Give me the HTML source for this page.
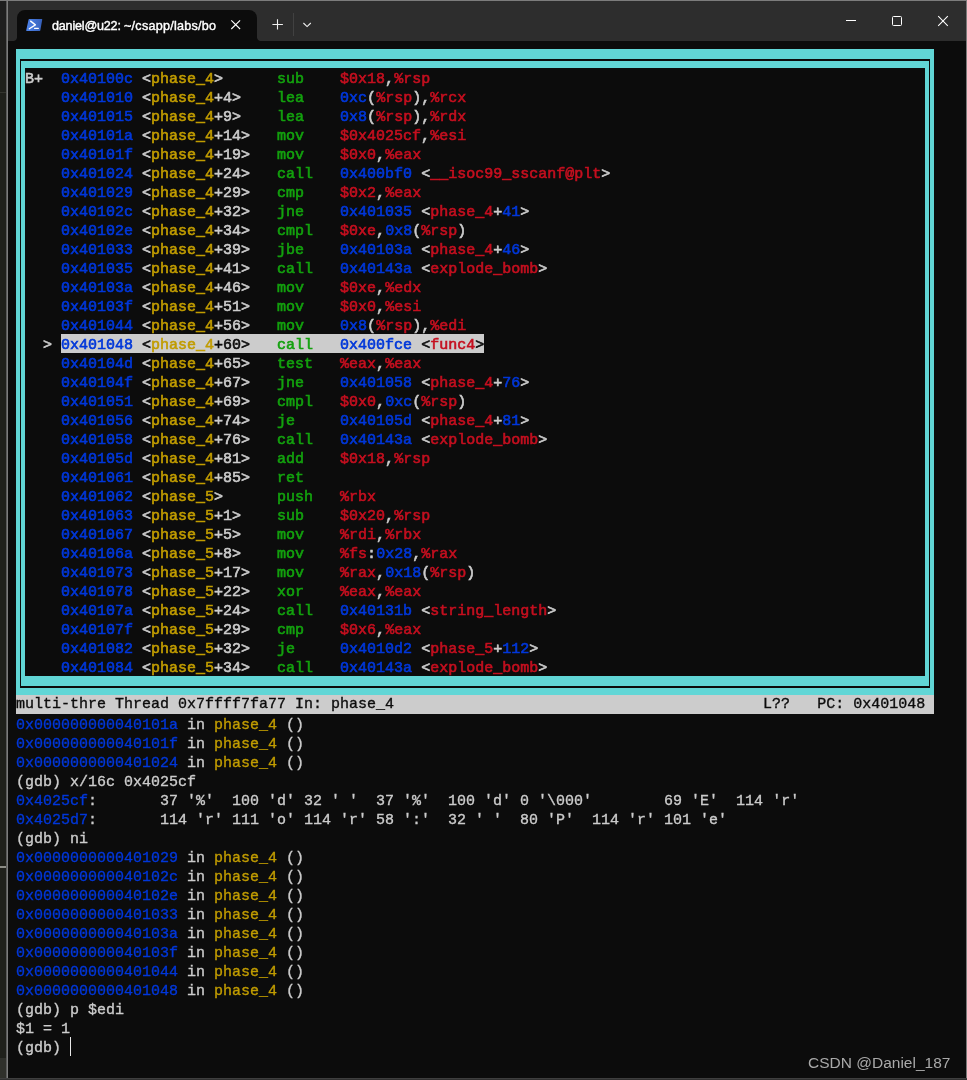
<!DOCTYPE html>
<html>
<head>
<meta charset="utf-8">
<title>gdb</title>
<style>
html,body{margin:0;padding:0;}
body{width:967px;height:1080px;overflow:hidden;background:#0c0c0c;position:relative;font-family:"Liberation Mono",monospace;}
.abs{position:absolute;}
/* outside strips */
#lstrip{left:0;top:0;width:6px;height:1080px;background:#1f201b;}
#lstrip1{left:0;top:0;width:6px;height:35px;background:#1e1e1e;}
#lstrip4{left:0;top:866px;width:6px;height:2px;background:#8c8c86;}
#lstrip5{left:0;top:92px;width:6px;height:1px;background:#34352f;}
#lstrip2{left:0;top:35px;width:6px;height:35px;background:#1e1e1c;}
#lstrip3{left:0;top:1058px;width:6px;height:22px;background:#2f302b;}
#bl{left:6px;top:0;width:2px;height:1078px;background:linear-gradient(to right,#595959 0,#595959 1px,#7c7c7c 1px,#7c7c7c 2px);}
#bt{left:0;top:0;width:967px;height:1px;background:#7c7c7c;}
#br{left:966px;top:0;width:1px;height:1078px;background:#7a7a7a;}
#bb{left:0;top:1078px;width:967px;height:1px;background:#3f3f3f;}
#bb2{left:0;top:1079px;width:967px;height:1px;background:#303030;}
#titlebar{left:8px;top:1px;width:958px;height:40px;background:#2d2d2d;}
#tab{left:17px;top:10px;width:240px;height:31px;background:#0c0c0c;border-radius:8px 8px 0 0;}
#tabl{left:13px;top:37px;width:4px;height:4px;background:radial-gradient(circle at 0 0,#2d2d2d 3.5px,#0c0c0c 4.5px);}
#tabr{left:257px;top:37px;width:4px;height:4px;background:radial-gradient(circle at 100% 0,#2d2d2d 3.5px,#0c0c0c 4.5px);}
#tabtext{left:52px;top:18px;font-family:"Liberation Sans",sans-serif;font-size:12.6px;line-height:16px;color:#fff;white-space:pre;letter-spacing:0.02px;-webkit-text-stroke:0.4px #fff;}
#divider{left:293px;top:13px;width:1px;height:23px;background:#414141;}
svg{position:absolute;overflow:visible;}
/* TUI frame */
#frame{left:16px;top:49px;width:918px;height:646px;background:#61d6d6;}
#fline{left:20px;top:59px;width:910px;height:629px;box-sizing:border-box;border:solid #0c0c0c;border-width:2px 1px 2px 1px;}
#inner{left:25px;top:68px;width:900px;height:608px;background:#0c0c0c;}
.row{position:absolute;height:19px;line-height:19px;font-size:15px;white-space:pre;color:#ccc;-webkit-text-stroke:0.35px currentColor;}
.row span{position:relative;top:1.5px;}
.tui{-webkit-text-stroke:0.6px currentColor;}
.w{color:#ccc}.b{color:#0037da}.y{color:#c19c00}.g{color:#13a10e}.r{color:#c50f1f}
.hl{background:#ccc;}
.hl .w{color:#0c0c0c}
.status{background:#ccc;color:#0c0c0c;}
#cursor{left:70px;top:1037px;width:1px;height:19px;background:#e8e8e8;}
#wm{left:808px;top:1053px;font-family:"Liberation Sans",sans-serif;font-size:15.5px;line-height:20px;color:#a9a9a9;white-space:pre;}
</style>
</head>
<body>
<div id="root" style="position:absolute;left:0;top:0;width:967px;height:1080px;will-change:transform;transform:translateZ(0)">
<div class="abs" id="lstrip"></div>
<div class="abs" id="lstrip1"></div>
<div class="abs" id="lstrip2"></div>
<div class="abs" id="lstrip3"></div>
<div class="abs" id="lstrip4"></div>
<div class="abs" id="lstrip5"></div>
<div class="abs" id="titlebar"></div>
<div class="abs" id="bl"></div>
<div class="abs" id="bt"></div>
<div class="abs" id="br"></div>
<div class="abs" id="bb"></div>
<div class="abs" id="bb2"></div>
<div class="abs" id="tab"></div>
<div class="abs" id="tabl"></div>
<div class="abs" id="tabr"></div>
<!-- powershell icon -->
<svg style="left:25.5px;top:19px" width="17" height="13" viewBox="0 0 17 13">
  <defs><linearGradient id="psg" x1="0" y1="0" x2="1" y2="0"><stop offset="0" stop-color="#4e84ec"/><stop offset="1" stop-color="#3660ba"/></linearGradient></defs>
  <path d="M3.3 0 H15.8 Q16.4 0 16.25 0.6 L14.35 11.3 Q14.2 11.9 13.6 11.9 H0.7 Q0.1 11.9 0.25 11.3 L2.6 0.6 Q2.75 0 3.3 0 Z" fill="url(#psg)"/>
  <path d="M4.6 2.1 L9.4 5.9 L3.3 9.7" fill="none" stroke="#fff" stroke-width="1.35" stroke-linecap="round" stroke-linejoin="round"/>
  <path d="M8.6 9.35 H12.3" fill="none" stroke="#fff" stroke-width="1.35" stroke-linecap="round"/>
</svg>
<div class="abs" id="tabtext"><span style="letter-spacing:-0.2px">daniel@u22: </span><span style="letter-spacing:0.25px">~/csapp/labs/bo</span></div>
<!-- tab close -->
<svg style="left:231px;top:20px" width="10" height="10" viewBox="0 0 10 10"><path d="M0.3 0.3 L9.1 9.0 M9.1 0.3 L0.3 9.0" stroke="#fff" stroke-width="1.1" fill="none"/></svg>
<!-- plus -->
<svg style="left:272px;top:19px" width="11" height="11" viewBox="0 0 11 11"><path d="M5.5 0.3 V10.6 M0.4 5.5 H10.9" stroke="#f0f0f0" stroke-width="1.1" fill="none"/></svg>
<div class="abs" id="divider"></div>
<!-- chevron -->
<svg style="left:302px;top:22px" width="10" height="6" viewBox="0 0 10 6"><path d="M1.4 1.0 L5.1 4.6 L8.8 1.0" stroke="#f0f0f0" stroke-width="1.1" fill="none"/></svg>
<!-- window controls -->
<div class="abs" style="left:846px;top:20px;width:10px;height:1px;background:#fff"></div>
<div class="abs" style="left:892px;top:16px;width:10px;height:10px;box-sizing:border-box;border:1px solid #fff;border-radius:1.5px"></div>
<svg style="left:938px;top:16px" width="10" height="10" viewBox="0 0 10 10"><path d="M0.2 0.2 L9.8 9.8 M9.8 0.2 L0.2 9.8" stroke="#fff" stroke-width="1.05" fill="none"/></svg>

<div class="abs" id="frame"></div>
<div class="abs" id="fline"></div>
<div class="abs" id="inner"></div>
<div class="row tui" style="top:68px;left:25px"><span class="w">B+</span></div>
<div class="row tui" style="top:68px;left:61px"><span class="b">0x40100c</span><span class="w"> &lt;</span><span class="y">phase_4</span><span class="w">&gt;      </span><span class="g">sub</span><span class="w">    </span><span class="r">$0x18</span><span class="w">,</span><span class="r">%rsp</span></div>
<div class="row tui" style="top:87px;left:61px"><span class="b">0x401010</span><span class="w"> &lt;</span><span class="y">phase_4</span><span class="w">+4&gt;    </span><span class="g">lea</span><span class="w">    </span><span class="b">0xc</span><span class="w">(</span><span class="r">%rsp</span><span class="w">)</span><span class="w">,</span><span class="r">%rcx</span></div>
<div class="row tui" style="top:106px;left:61px"><span class="b">0x401015</span><span class="w"> &lt;</span><span class="y">phase_4</span><span class="w">+9&gt;    </span><span class="g">lea</span><span class="w">    </span><span class="b">0x8</span><span class="w">(</span><span class="r">%rsp</span><span class="w">)</span><span class="w">,</span><span class="r">%rdx</span></div>
<div class="row tui" style="top:125px;left:61px"><span class="b">0x40101a</span><span class="w"> &lt;</span><span class="y">phase_4</span><span class="w">+14&gt;   </span><span class="g">mov</span><span class="w">    </span><span class="r">$0x4025cf</span><span class="w">,</span><span class="r">%esi</span></div>
<div class="row tui" style="top:144px;left:61px"><span class="b">0x40101f</span><span class="w"> &lt;</span><span class="y">phase_4</span><span class="w">+19&gt;   </span><span class="g">mov</span><span class="w">    </span><span class="r">$0x0</span><span class="w">,</span><span class="r">%eax</span></div>
<div class="row tui" style="top:163px;left:61px"><span class="b">0x401024</span><span class="w"> &lt;</span><span class="y">phase_4</span><span class="w">+24&gt;   </span><span class="g">call</span><span class="w">   </span><span class="b">0x400bf0</span><span class="w"> </span><span class="w">&lt;</span><span class="r">__isoc99_sscanf@plt</span><span class="w">&gt;</span></div>
<div class="row tui" style="top:182px;left:61px"><span class="b">0x401029</span><span class="w"> &lt;</span><span class="y">phase_4</span><span class="w">+29&gt;   </span><span class="g">cmp</span><span class="w">    </span><span class="r">$0x2</span><span class="w">,</span><span class="r">%eax</span></div>
<div class="row tui" style="top:201px;left:61px"><span class="b">0x40102c</span><span class="w"> &lt;</span><span class="y">phase_4</span><span class="w">+32&gt;   </span><span class="g">jne</span><span class="w">    </span><span class="b">0x401035</span><span class="w"> </span><span class="w">&lt;</span><span class="r">phase_4</span><span class="w">+</span><span class="b">41</span><span class="w">&gt;</span></div>
<div class="row tui" style="top:220px;left:61px"><span class="b">0x40102e</span><span class="w"> &lt;</span><span class="y">phase_4</span><span class="w">+34&gt;   </span><span class="g">cmpl</span><span class="w">   </span><span class="r">$0xe</span><span class="w">,</span><span class="b">0x8</span><span class="w">(</span><span class="r">%rsp</span><span class="w">)</span></div>
<div class="row tui" style="top:239px;left:61px"><span class="b">0x401033</span><span class="w"> &lt;</span><span class="y">phase_4</span><span class="w">+39&gt;   </span><span class="g">jbe</span><span class="w">    </span><span class="b">0x40103a</span><span class="w"> </span><span class="w">&lt;</span><span class="r">phase_4</span><span class="w">+</span><span class="b">46</span><span class="w">&gt;</span></div>
<div class="row tui" style="top:258px;left:61px"><span class="b">0x401035</span><span class="w"> &lt;</span><span class="y">phase_4</span><span class="w">+41&gt;   </span><span class="g">call</span><span class="w">   </span><span class="b">0x40143a</span><span class="w"> </span><span class="w">&lt;</span><span class="r">explode_bomb</span><span class="w">&gt;</span></div>
<div class="row tui" style="top:277px;left:61px"><span class="b">0x40103a</span><span class="w"> &lt;</span><span class="y">phase_4</span><span class="w">+46&gt;   </span><span class="g">mov</span><span class="w">    </span><span class="r">$0xe</span><span class="w">,</span><span class="r">%edx</span></div>
<div class="row tui" style="top:296px;left:61px"><span class="b">0x40103f</span><span class="w"> &lt;</span><span class="y">phase_4</span><span class="w">+51&gt;   </span><span class="g">mov</span><span class="w">    </span><span class="r">$0x0</span><span class="w">,</span><span class="r">%esi</span></div>
<div class="row tui" style="top:315px;left:61px"><span class="b">0x401044</span><span class="w"> &lt;</span><span class="y">phase_4</span><span class="w">+56&gt;   </span><span class="g">mov</span><span class="w">    </span><span class="b">0x8</span><span class="w">(</span><span class="r">%rsp</span><span class="w">)</span><span class="w">,</span><span class="r">%edi</span></div>
<div class="row tui" style="top:334px;left:25px"><span class="w">  &gt;</span></div>
<div class="row tui hl" style="top:334px;left:61px"><span class="b">0x401048</span><span class="w"> &lt;</span><span class="y">phase_4</span><span class="w">+60&gt;   </span><span class="g">call</span><span class="w">   </span><span class="b">0x400fce</span><span class="w"> </span><span class="w">&lt;</span><span class="r">func4</span><span class="w">&gt;</span></div>
<div class="row tui" style="top:353px;left:61px"><span class="b">0x40104d</span><span class="w"> &lt;</span><span class="y">phase_4</span><span class="w">+65&gt;   </span><span class="g">test</span><span class="w">   </span><span class="r">%eax</span><span class="w">,</span><span class="r">%eax</span></div>
<div class="row tui" style="top:372px;left:61px"><span class="b">0x40104f</span><span class="w"> &lt;</span><span class="y">phase_4</span><span class="w">+67&gt;   </span><span class="g">jne</span><span class="w">    </span><span class="b">0x401058</span><span class="w"> </span><span class="w">&lt;</span><span class="r">phase_4</span><span class="w">+</span><span class="b">76</span><span class="w">&gt;</span></div>
<div class="row tui" style="top:391px;left:61px"><span class="b">0x401051</span><span class="w"> &lt;</span><span class="y">phase_4</span><span class="w">+69&gt;   </span><span class="g">cmpl</span><span class="w">   </span><span class="r">$0x0</span><span class="w">,</span><span class="b">0xc</span><span class="w">(</span><span class="r">%rsp</span><span class="w">)</span></div>
<div class="row tui" style="top:410px;left:61px"><span class="b">0x401056</span><span class="w"> &lt;</span><span class="y">phase_4</span><span class="w">+74&gt;   </span><span class="g">je</span><span class="w">     </span><span class="b">0x40105d</span><span class="w"> </span><span class="w">&lt;</span><span class="r">phase_4</span><span class="w">+</span><span class="b">81</span><span class="w">&gt;</span></div>
<div class="row tui" style="top:429px;left:61px"><span class="b">0x401058</span><span class="w"> &lt;</span><span class="y">phase_4</span><span class="w">+76&gt;   </span><span class="g">call</span><span class="w">   </span><span class="b">0x40143a</span><span class="w"> </span><span class="w">&lt;</span><span class="r">explode_bomb</span><span class="w">&gt;</span></div>
<div class="row tui" style="top:448px;left:61px"><span class="b">0x40105d</span><span class="w"> &lt;</span><span class="y">phase_4</span><span class="w">+81&gt;   </span><span class="g">add</span><span class="w">    </span><span class="r">$0x18</span><span class="w">,</span><span class="r">%rsp</span></div>
<div class="row tui" style="top:467px;left:61px"><span class="b">0x401061</span><span class="w"> &lt;</span><span class="y">phase_4</span><span class="w">+85&gt;   </span><span class="g">ret</span></div>
<div class="row tui" style="top:486px;left:61px"><span class="b">0x401062</span><span class="w"> &lt;</span><span class="y">phase_5</span><span class="w">&gt;      </span><span class="g">push</span><span class="w">   </span><span class="r">%rbx</span></div>
<div class="row tui" style="top:505px;left:61px"><span class="b">0x401063</span><span class="w"> &lt;</span><span class="y">phase_5</span><span class="w">+1&gt;    </span><span class="g">sub</span><span class="w">    </span><span class="r">$0x20</span><span class="w">,</span><span class="r">%rsp</span></div>
<div class="row tui" style="top:524px;left:61px"><span class="b">0x401067</span><span class="w"> &lt;</span><span class="y">phase_5</span><span class="w">+5&gt;    </span><span class="g">mov</span><span class="w">    </span><span class="r">%rdi</span><span class="w">,</span><span class="r">%rbx</span></div>
<div class="row tui" style="top:543px;left:61px"><span class="b">0x40106a</span><span class="w"> &lt;</span><span class="y">phase_5</span><span class="w">+8&gt;    </span><span class="g">mov</span><span class="w">    </span><span class="r">%fs</span><span class="w">:</span><span class="b">0x28</span><span class="w">,</span><span class="r">%rax</span></div>
<div class="row tui" style="top:562px;left:61px"><span class="b">0x401073</span><span class="w"> &lt;</span><span class="y">phase_5</span><span class="w">+17&gt;   </span><span class="g">mov</span><span class="w">    </span><span class="r">%rax</span><span class="w">,</span><span class="b">0x18</span><span class="w">(</span><span class="r">%rsp</span><span class="w">)</span></div>
<div class="row tui" style="top:581px;left:61px"><span class="b">0x401078</span><span class="w"> &lt;</span><span class="y">phase_5</span><span class="w">+22&gt;   </span><span class="g">xor</span><span class="w">    </span><span class="r">%eax</span><span class="w">,</span><span class="r">%eax</span></div>
<div class="row tui" style="top:600px;left:61px"><span class="b">0x40107a</span><span class="w"> &lt;</span><span class="y">phase_5</span><span class="w">+24&gt;   </span><span class="g">call</span><span class="w">   </span><span class="b">0x40131b</span><span class="w"> </span><span class="w">&lt;</span><span class="r">string_length</span><span class="w">&gt;</span></div>
<div class="row tui" style="top:619px;left:61px"><span class="b">0x40107f</span><span class="w"> &lt;</span><span class="y">phase_5</span><span class="w">+29&gt;   </span><span class="g">cmp</span><span class="w">    </span><span class="r">$0x6</span><span class="w">,</span><span class="r">%eax</span></div>
<div class="row tui" style="top:638px;left:61px"><span class="b">0x401082</span><span class="w"> &lt;</span><span class="y">phase_5</span><span class="w">+32&gt;   </span><span class="g">je</span><span class="w">     </span><span class="b">0x4010d2</span><span class="w"> </span><span class="w">&lt;</span><span class="r">phase_5</span><span class="w">+</span><span class="b">112</span><span class="w">&gt;</span></div>
<div class="row tui" style="top:657px;left:61px"><span class="b">0x401084</span><span class="w"> &lt;</span><span class="y">phase_5</span><span class="w">+34&gt;   </span><span class="g">call</span><span class="w">   </span><span class="b">0x40143a</span><span class="w"> </span><span class="w">&lt;</span><span class="r">explode_bomb</span><span class="w">&gt;</span></div>
<div class="row status" style="top:695px;left:16px;width:918px">multi-thre Thread 0x7ffff7fa77 In: phase_4                                         L??   PC: 0x401048 </div>
<div class="row" style="top:714px;left:16px"><span class="b">0x000000000040101a</span><span class="w"> in </span><span class="y">phase_4</span><span class="w"> ()</span></div>
<div class="row" style="top:733px;left:16px"><span class="b">0x000000000040101f</span><span class="w"> in </span><span class="y">phase_4</span><span class="w"> ()</span></div>
<div class="row" style="top:752px;left:16px"><span class="b">0x0000000000401024</span><span class="w"> in </span><span class="y">phase_4</span><span class="w"> ()</span></div>
<div class="row" style="top:771px;left:16px"><span class="w">(gdb) x/16c 0x4025cf</span></div>
<div class="row" style="top:790px;left:16px"><span class="b">0x4025cf</span><span class="w">:       37 &#x27;%&#x27;  100 &#x27;d&#x27; 32 &#x27; &#x27;  37 &#x27;%&#x27;  100 &#x27;d&#x27; 0 &#x27;\000&#x27;        69 &#x27;E&#x27;  114 &#x27;r&#x27;</span></div>
<div class="row" style="top:809px;left:16px"><span class="b">0x4025d7</span><span class="w">:       114 &#x27;r&#x27; 111 &#x27;o&#x27; 114 &#x27;r&#x27; 58 &#x27;:&#x27;  32 &#x27; &#x27;  80 &#x27;P&#x27;  114 &#x27;r&#x27; 101 &#x27;e&#x27;</span></div>
<div class="row" style="top:828px;left:16px"><span class="w">(gdb) ni</span></div>
<div class="row" style="top:847px;left:16px"><span class="b">0x0000000000401029</span><span class="w"> in </span><span class="y">phase_4</span><span class="w"> ()</span></div>
<div class="row" style="top:866px;left:16px"><span class="b">0x000000000040102c</span><span class="w"> in </span><span class="y">phase_4</span><span class="w"> ()</span></div>
<div class="row" style="top:885px;left:16px"><span class="b">0x000000000040102e</span><span class="w"> in </span><span class="y">phase_4</span><span class="w"> ()</span></div>
<div class="row" style="top:904px;left:16px"><span class="b">0x0000000000401033</span><span class="w"> in </span><span class="y">phase_4</span><span class="w"> ()</span></div>
<div class="row" style="top:923px;left:16px"><span class="b">0x000000000040103a</span><span class="w"> in </span><span class="y">phase_4</span><span class="w"> ()</span></div>
<div class="row" style="top:942px;left:16px"><span class="b">0x000000000040103f</span><span class="w"> in </span><span class="y">phase_4</span><span class="w"> ()</span></div>
<div class="row" style="top:961px;left:16px"><span class="b">0x0000000000401044</span><span class="w"> in </span><span class="y">phase_4</span><span class="w"> ()</span></div>
<div class="row" style="top:980px;left:16px"><span class="b">0x0000000000401048</span><span class="w"> in </span><span class="y">phase_4</span><span class="w"> ()</span></div>
<div class="row" style="top:999px;left:16px"><span class="w">(gdb) p $edi</span></div>
<div class="row" style="top:1018px;left:16px"><span class="w">$1 = 1</span></div>
<div class="row" style="top:1037px;left:16px"><span class="w">(gdb) </span></div>
<div class="abs" id="cursor"></div>
<div class="abs" id="wm">CSDN @Daniel_187</div>
</div>
</body>
</html>
